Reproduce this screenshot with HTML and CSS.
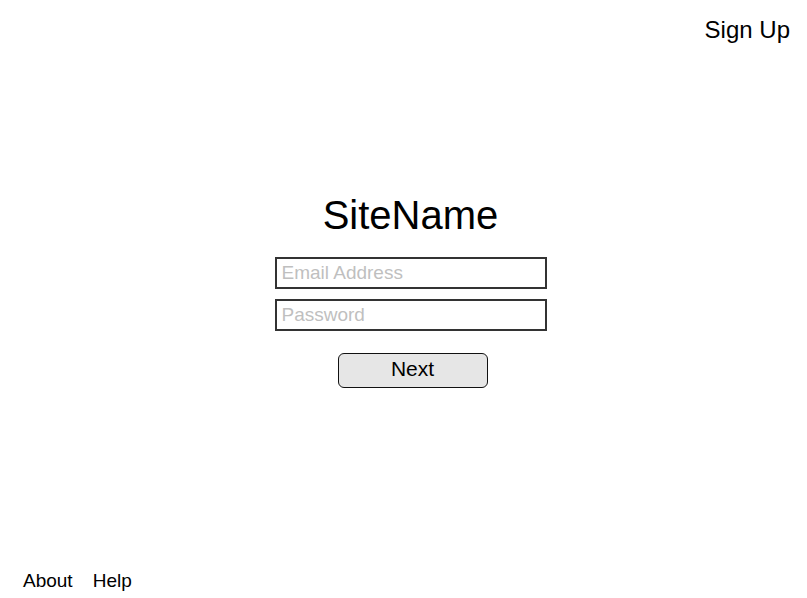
FILE: index.html
```html
<!DOCTYPE html>
<html lang="en">
<head>
<meta charset="utf-8">
<title>SiteName - Sign In</title>
<link rel="stylesheet" href="styles.css">
</head>
<body>
<div class="page">
  <header class="topbar">
    <a class="signup" href="#">Sign Up</a>
  </header>
  <main class="login">
    <h1 class="site-name">SiteName</h1>
    <form class="login-form">
      <input class="field" type="email" placeholder="Email Address">
      <input class="field" type="password" placeholder="Password">
      <button class="next-btn" type="button">Next</button>
    </form>
  </main>
  <footer class="footer">
    <a class="footer-link" href="#">About</a>
    <a class="footer-link" href="#">Help</a>
  </footer>
</div>
</body>
</html>
```
FILE: styles.css
```css
html, body {
  margin: 0;
  padding: 0;
  background: #ffffff;
}

body {
  font-family: "Liberation Sans", Arial, sans-serif;
  color: #000000;
}

a {
  color: #000000;
  text-decoration: none;
}

.page {
  height: 100vh;
  display: flex;
  flex-direction: column;
}

.topbar {
  display: flex;
  justify-content: flex-end;
  padding: 16px 17px 0 0;
}

.signup {
  font-size: 24px;
  line-height: 28px;
}

.login {
  display: flex;
  flex-direction: column;
  align-items: center;
  margin-top: 148px;
  padding-left: 14px;
}

.site-name {
  margin: 0;
  font-size: 40px;
  font-weight: normal;
  line-height: 46px;
}

.login-form {
  display: flex;
  flex-direction: column;
  align-items: center;
  gap: 10px;
  margin-top: 19px;
}

.field {
  box-sizing: border-box;
  width: 272px;
  height: 32px;
  margin: 0;
  padding: 0 5px;
  border: 2px solid #333333;
  border-radius: 0;
  background: #ffffff;
  font-family: "Liberation Sans", Arial, sans-serif;
  font-size: 19px;
  color: #000000;
  outline: none;
}

.field::placeholder {
  color: #bfbfbf;
  opacity: 1;
}

.next-btn {
  box-sizing: border-box;
  width: 150px;
  height: 35px;
  margin: 12px 0 0 4px;
  padding: 0 0 3px;
  border: 1px solid #111111;
  border-radius: 6px;
  background: #e6e6e6;
  font-family: "Liberation Sans", Arial, sans-serif;
  font-size: 21px;
  color: #000000;
  cursor: pointer;
}

.footer {
  margin-top: auto;
  display: flex;
  gap: 20px;
  padding: 0 0 6px 23px;
}

.footer-link {
  font-size: 19px;
  line-height: 22px;
}
```
